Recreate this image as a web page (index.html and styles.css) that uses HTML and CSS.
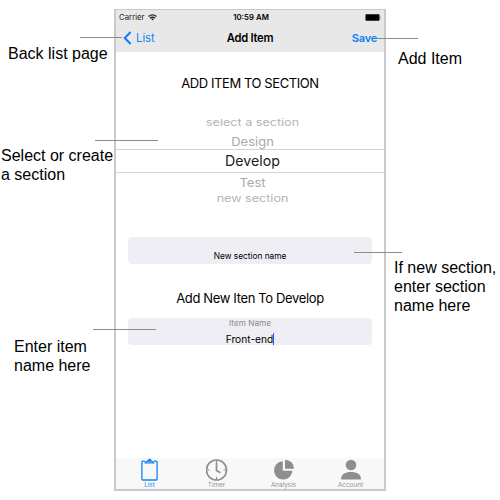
FILE: index.html
```
<!DOCTYPE html>
<html lang="en">
<head>
<meta charset="utf-8">
<title>Add Item</title>
<link rel="stylesheet" href="styles.css">
</head>
<body>
<main class="phone">
  <header class="top">
    <div class="status">
      <span class="carrier">Carrier
        <svg class="wifi" width="9" height="7" viewBox="0 0 9 7" fill="none" stroke="#222"><path d="M.5 2.500Q4.500-.8 8.500 2.500M2 4.200Q4.500 2.200 7 4.200" stroke-width="1.400"/><path d="M3.200 5 4.500 6.600 5.800 5Q4.500 4 3.200 5Z" fill="#222" stroke="none"/></svg>
      </span>
      <span class="time">10:59 AM</span>
      <svg class="battery" width="17" height="7" viewBox="0 0 17 7"><rect x="1.500" y=".3" width="14" height="6.400" rx=".8" fill="#000"/><path d="M16 2.200Q17 3.500 16 4.800Z" fill="#222"/></svg>
    </div>
    <nav class="nav">
      <span class="back"><svg width="9" height="14" viewBox="0 0 9 14"><path d="M7.600 1 1.700 7l5.900 6" fill="none" stroke="#0b7cf5" stroke-width="2"/></svg><span class="back-label">List</span></span>
      <span class="title">Add Item</span>
      <span class="save">Save</span>
    </nav>
  </header>
  <h1 class="heading">ADD ITEM TO SECTION</h1>
  <div class="picker">
    <div class="option far"><span class="first">select a section</span></div>
    <div class="option near"><span>Design</span></div>
    <div class="option selected"><span>Develop</span></div>
    <div class="option near below"><span>Test</span></div>
    <div class="option far last"><span>new section</span></div>
  </div>
  <div class="field section-field"><span>New section name</span></div>
  <h2 class="subheading">Add New Iten To Develop</h2>
  <div class="field item-field"><span class="label">Item Name</span><span class="value">Front-end</span></div>
  <footer class="tabs">
    <div class="tab active">
      <svg width="22" height="24" viewBox="0 0 22 24" fill="none" stroke="#1683f5"><path d="M6 3.200H3.800Q2.900 3.200 2.900 4.100v17q0 .9.900.9h13.400q.9 0 .9-.9v-17q0-.9-.9-.9H15" stroke-width="1.300"/><path d="M5.500 5.400Q5.600 2.700 8.200 2.700 8.600.8 10.500.8T12.800 2.700Q15.400 2.700 15.500 5.400Z" fill="#1683f5" stroke="none"/><path d="M7.500 4.100h6" stroke="#b4d7fb" stroke-width=".6"/></svg>
      <span>List</span>
    </div>
    <div class="tab">
      <svg width="22" height="24" viewBox="0 0 22 24" fill="none" stroke="#8e8e8e"><circle cx="10.500" cy="12" r="10" stroke-width="1.600"/><path d="M10.500 2v3M10.500 19v3M.5 12h3M17.500 12h3" stroke-width="1.200"/><path d="M10.500 5v7.500l4 2.200" stroke-width="1.700"/></svg>
      <span>Timer</span>
    </div>
    <div class="tab">
      <svg width="22" height="24" viewBox="0 0 22 24" fill="#8e8e8e"><path d="M9.800 3.200v9.600h9.600A9.200 9.200 0 1 1 9.800 3.200Z"/><path d="M12 1.700a9 9 0 0 1 9 9h-9Z"/></svg>
      <span>Analysis</span>
    </div>
    <div class="tab">
      <svg width="22" height="24" viewBox="0 0 22 24" fill="#8e8e8e"><circle cx="11" cy="7" r="5.300"/><path d="M1 21.600C1 16 5 14 11 14S21 16 21 21.600Z"/></svg>
      <span>Account</span>
    </div>
  </footer>
</main>
<i class="line line-back"></i>
<i class="line line-add"></i>
<i class="line line-select"></i>
<i class="line line-new"></i>
<i class="line line-enter"></i>
<p class="note note-back">Back list page</p>
<p class="note note-add">Add Item</p>
<p class="note note-select">Select or create<br>a section</p>
<p class="note note-new">If new section,<br>enter section<br>name here</p>
<p class="note note-enter">Enter item<br>name here</p>
</body>
</html>
```
FILE: styles.css
```
* { box-sizing: border-box; }
body {
  position: relative;
  margin: 0;
  width: 500px;
  height: 500px;
  padding: 9px 0 0 114px;
  overflow: hidden;
  background: #fff;
  color: #000;
  font-family: Inter, "Liberation Sans", sans-serif;
}
span { white-space: nowrap; }
.phone {
  display: flex;
  flex-direction: column;
  width: 272px;
  height: 482px;
  border: 2px solid #c9c9c9;
  border-top-width: 1px;
}
.top { flex: none; height: 42px; background: #e8e8e8; }
.status {
  display: grid;
  grid-template-columns: 1fr auto 1fr;
  align-items: center;
  height: 14px;
  padding: 0 3px;
  font-size: 7.8px;
  line-height: 14px;
}
.carrier { display: flex; align-items: center; gap: 3px; color: #222; }
.time { padding-left: 2px; font-weight: 600; }
.battery { justify-self: end; }
.nav {
  display: grid;
  grid-template-columns: 1fr auto 1fr;
  align-items: center;
  height: 28px;
  padding: 0 7px;
  font-size: 11.3px;
}
.back { display: flex; align-items: center; gap: 4px; color: #1683f5; }
.title { font-weight: 600; font-size: 11.2px; letter-spacing: -.25px; }
.save { justify-self: end; color: #0b7cf5; font-weight: 600; font-size: 11px; letter-spacing: -.2px; }
.heading, .subheading {
  margin: 0;
  text-align: center;
  font-weight: 400;
  white-space: nowrap;
}
.heading { margin-top: 21px; font-size: 13px; line-height: 20px; letter-spacing: -.42px; }
.picker { margin-top: 20px; text-align: center; }
.option { display: flex; justify-content: center; align-items: center; padding-left: 5px; }
.far { height: 19px; font-size: 12.6px; color: #b4b4b4; }
.far span { transform: scaleY(.76); }
.near { height: 17px; font-size: 13px; color: #aaa; }
.near span { transform: scaleY(.94); }
.below { height: 17px; }
.selected {
  height: 24px;
  border: solid #d4d4d4;
  border-width: 1px 0;
  font-size: 14.2px;
  color: #222;
}
.selected span { margin-top: -1px; }
.last { height: 17px; }
.field {
  flex: none;
  display: flex;
  flex-direction: column;
  align-items: center;
  width: 244px;
  height: 27px;
  margin-left: 12px;
  border-radius: 4px;
  background: #efeef4;
}
.section-field { margin-top: 30px; padding-top: 13px; font-size: 8.3px; line-height: 13px; }
.subheading { margin-top: 24px; font-size: 13px; line-height: 20px; letter-spacing: -.36px; }
.item-field { margin-top: 10px; }
.label { font-size: 8.2px; line-height: 11px; color: #8c8c8c; }
.value { border-right: 1px solid #2d58e0; font-size: 10.2px; line-height: 12px; margin-top: 4px; }
.tabs {
  display: grid;
  grid-template-columns: repeat(4, 1fr);
  height: 31px;
  margin-top: auto;
  background: #f8f8f8;
}
.tab { display: flex; flex-direction: column; align-items: center; font-size: 6.4px; line-height: 7px; color: #939393; }
.tab svg { flex: none; }
.active { color: #1683f5; }
.line { position: absolute; height: 1px; background: #8c8c8c; }
.line-back { left: 80px; top: 37px; width: 42px; }
.line-add { left: 377px; top: 38px; width: 41px; }
.line-select { left: 95px; top: 140px; width: 63px; }
.line-new { left: 354px; top: 252px; width: 48px; }
.line-enter { left: 93px; top: 329px; width: 63px; }
.note {
  position: absolute;
  margin: 0;
  font: 16px/19px "Liberation Sans", Arial, sans-serif;
  white-space: nowrap;
}
.note-back { left: 8px; top: 44px; }
.note-add { left: 398px; top: 49px; }
.note-select { left: 1px; top: 146px; }
.note-new { left: 394px; top: 258px; }
.note-enter { left: 14px; top: 337px; }
```
